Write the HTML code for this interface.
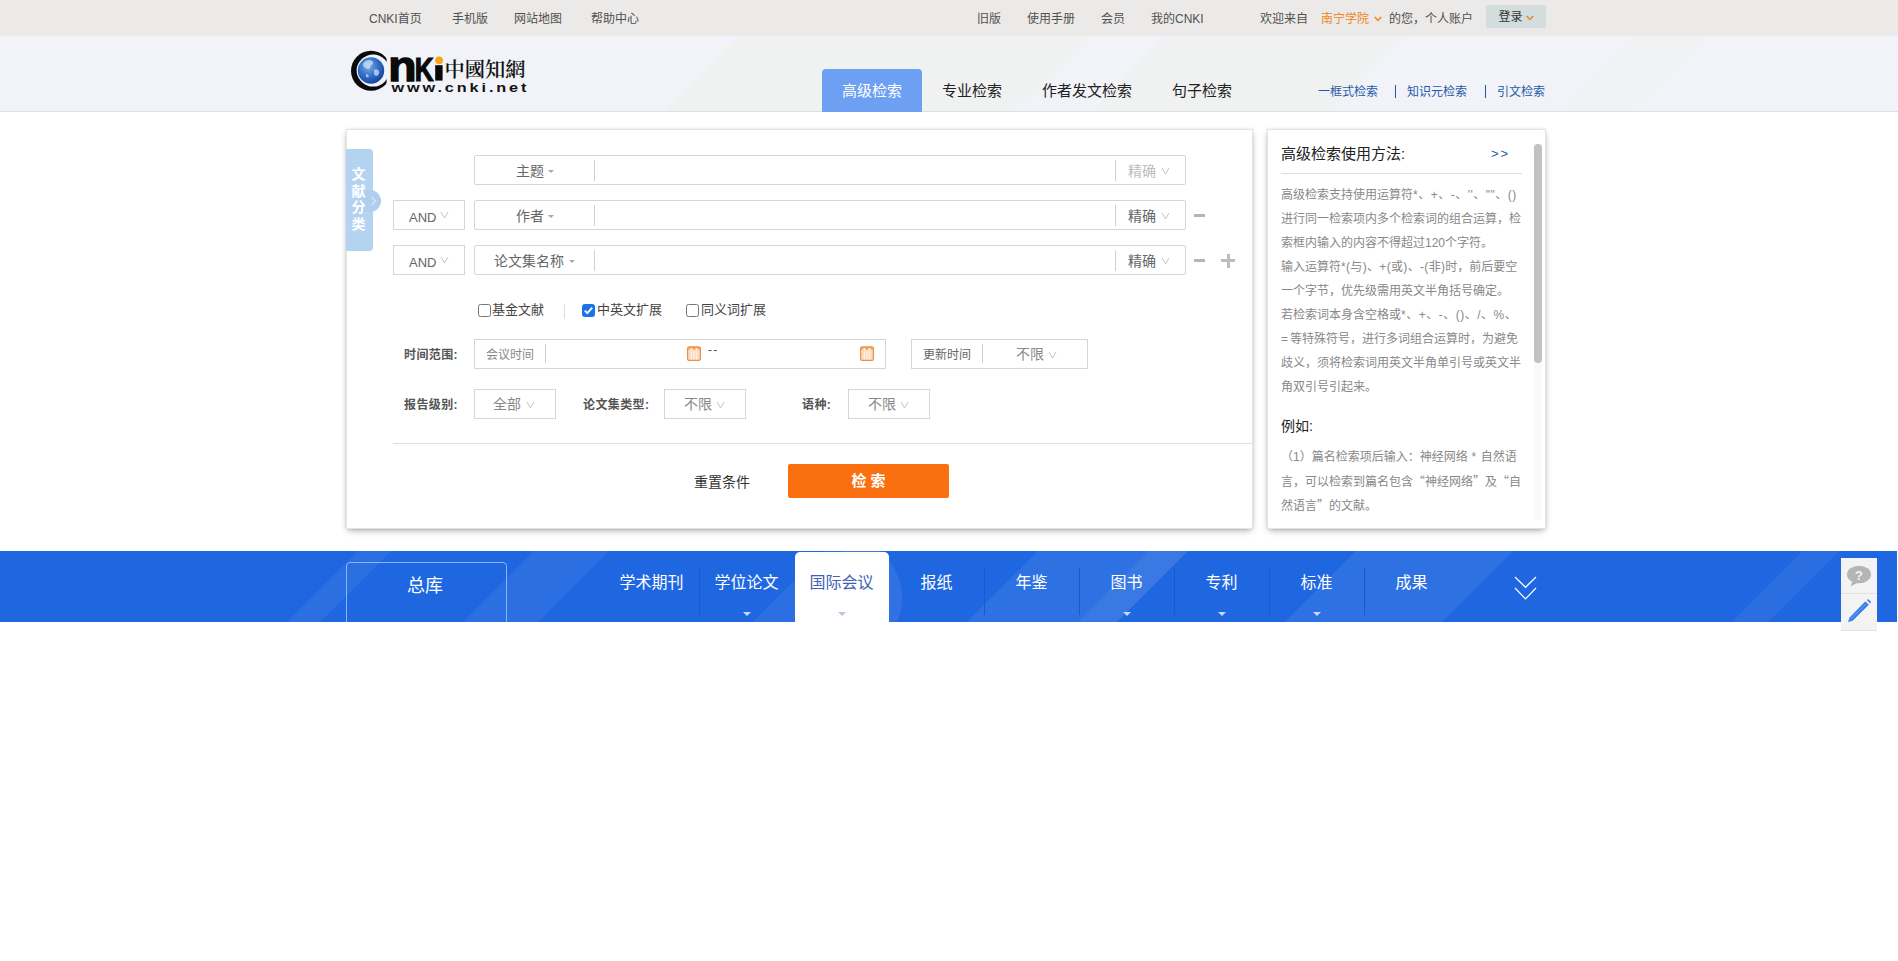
<!DOCTYPE html>
<html lang="zh-CN">
<head>
<meta charset="utf-8">
<title>高级检索-中国知网</title>
<style>
*{box-sizing:border-box;margin:0;padding:0}
html,body{width:1898px;height:961px;overflow:hidden;background:#fff}
body{position:relative;font-family:"Liberation Sans","Noto Sans CJK SC",sans-serif;font-size:12px;color:#333}
.abs{position:absolute;white-space:nowrap}
/* top bar */
#topbar{position:absolute;left:0;top:0;width:1898px;height:36px;background:#ebeae8}
#topbar .t{position:absolute;top:1px;line-height:36px;font-size:12px;color:#505050;white-space:nowrap}
#login{position:absolute;left:1486px;top:5px;width:60px;height:23px;background:#d3dddd;border-radius:2px;font-size:12px;color:#333;line-height:25px;padding-left:12.5px}
/* header */
#header{position:absolute;left:0;top:36px;width:1898px;height:76px;background:#f1f3f8;overflow:hidden}
.tab{position:absolute;top:33px;height:43px;line-height:43px;font-size:15px;color:#222;white-space:nowrap}
#tab1{left:822px;width:100px;background:#6d9ff2;color:#fff;border-radius:4px 4px 0 0;text-align:center}
.rl{position:absolute;top:48px;font-size:12px;color:#1f5aa6;line-height:16px;white-space:nowrap}
.rsep{position:absolute;top:49px;width:1px;height:13px;background:#1f5aa6}
/* main panel */
#panel{position:absolute;left:346px;top:129px;width:907px;height:400px;background:#fff;border:1px solid #e3e3e3;box-shadow:0 3px 7px -2px rgba(0,0,0,.38),0 0 3px rgba(0,0,0,.08)}
#side{position:absolute;left:346px;top:129px;width:279px;height:400px}
#rpanel{position:absolute;left:1267px;top:129px;width:279px;height:400px;background:#fff;border:1px solid #e3e3e3;box-shadow:0 3px 7px -2px rgba(0,0,0,.38),0 0 3px rgba(0,0,0,.08);overflow:hidden}
.box{position:absolute;border:1px solid #d6d6d6;background:#fff}
.bt{position:absolute;font-size:14px;color:#666;white-space:nowrap;line-height:20px}
.lb{position:absolute;font-size:12px;font-weight:bold;color:#555;letter-spacing:.4px;white-space:nowrap;line-height:16px}
.vs{position:absolute;width:1px;background:#d0d0d0}
/* blue bar */
#bar{position:absolute;left:0;top:551px;width:1897px;height:71px;background:#1f67e1;overflow:hidden}
.nv{position:absolute;top:21px;font-size:16px;color:#fff;line-height:22px;white-space:nowrap}
.nsep{position:absolute;top:17px;width:1px;height:47px;background:#1a59c9}
.tri{position:absolute;top:61px;width:0;height:0;border-left:4.5px solid transparent;border-right:4.5px solid transparent;border-top:4.5px solid #c9d9f7;margin-left:.5px}

.dn{position:absolute;width:0;height:0;border-left:3px solid transparent;border-right:3px solid transparent;border-top:3px solid #aaa}
.vv{position:absolute;width:9px;height:8px;overflow:visible}
.vv path{fill:none;stroke:#c4c4c4;stroke-width:1}
.cb{position:absolute;width:13px;height:13px;border:1px solid #767676;border-radius:2.5px;background:#fff}
.cb.on{background:#1a73e8;border-color:#1a73e8}
.ct{position:absolute;font-size:13px;line-height:18px;color:#444;white-space:nowrap}
.cal{position:absolute}

.hl{position:absolute;left:13px;font-size:12px;line-height:24px;color:#888;white-space:nowrap}
.st{position:absolute;top:0;height:71px;background:#fff;transform:skewX(-45deg);transform-origin:0 100%}

.hs{position:absolute;top:0;height:76px;background:#f0efee;opacity:.7;transform:skewX(-45deg);transform-origin:0 100%}
.q{font-family:"Noto Sans CJK SC",sans-serif}
.ls{letter-spacing:.5px}
</style>
</head>
<body>
<!-- TOPBAR -->
<div id="topbar">
<span class="t" style="left:369px">CNKI首页</span>
<span class="t" style="left:452px">手机版</span>
<span class="t" style="left:514px">网站地图</span>
<span class="t" style="left:591px">帮助中心</span>
<span class="t" style="left:977px">旧版</span>
<span class="t" style="left:1027px">使用手册</span>
<span class="t" style="left:1101px">会员</span>
<span class="t" style="left:1151px">我的CNKI</span>
<span class="t" style="left:1260px">欢迎来自</span>
<span class="t" style="left:1321px;color:#f08519">南宁学院</span>
<span class="t" style="left:1389px">的您，个人账户</span>
<div id="login">登录</div>
<svg style="position:absolute;left:1374px;top:16px" width="8" height="6" viewBox="0 0 8 6"><path d="M0.8 1 L4 4.4 L7.2 1" fill="none" stroke="#f08519" stroke-width="1.5"/></svg>
<svg style="position:absolute;left:1526px;top:15px" width="8" height="6" viewBox="0 0 8 6"><path d="M0.8 1 L4 4.4 L7.2 1" fill="none" stroke="#f08519" stroke-width="1.5"/></svg>
</div>
<!-- HEADER -->
<div id="header">
<div class="hs" style="left:663px;width:350px"></div><div class="hs" style="left:1090px;width:240px"></div><div class="hs" style="left:1560px;width:70px;opacity:.4"></div>
<div style="position:absolute;left:0;top:75px;width:1898px;height:1px;background:#dcdfe3"></div>
<svg id="logo" style="position:absolute;left:346px;top:10px" width="190" height="52" viewBox="346 46 190 52">
<defs><radialGradient id="gl" cx="0.4" cy="0.35" r="0.7"><stop offset="0" stop-color="#7fb0e6"/><stop offset="0.5" stop-color="#3472c8"/><stop offset="1" stop-color="#143f9c"/></radialGradient>
<mask id="cm"><rect x="346" y="46" width="40.6" height="52" fill="#fff"/><circle cx="373.2" cy="70.6" r="16" fill="#000"/></mask></defs>
<circle cx="371" cy="70.8" r="20" fill="#0a0a0a" mask="url(#cm)"/>
<circle cx="371" cy="70.5" r="14.4" fill="#e9f1fb"/>
<circle cx="371" cy="70.5" r="13.2" fill="url(#gl)"/>
<path d="M363 64 q2 -4 7 -4 q4 1 3 4 q-3 1 -3 4 q-2 2 -4 0 q-3 -1 -3 -4z M374 70 q3 -2 5 1 q1 3 -2 5 q-3 0 -3 -3z M366 74 q2 0 3 2 q-1 2 -3 1z" fill="#d6e6f8" opacity=".7"/>
<text transform="translate(388.3 80.6) scale(1.1 1)" font-family="Liberation Sans, sans-serif" font-weight="bold" font-size="42" fill="#0a0a0a" stroke="#0a0a0a" stroke-width="1.4">n</text>
<text transform="translate(414.8 80.6) scale(0.8 1)" font-family="Liberation Sans, sans-serif" font-weight="bold" font-size="32.5" fill="#0a0a0a" stroke="#0a0a0a" stroke-width="1.2">K</text>
<rect x="435.2" y="65.2" width="7.4" height="15.4" fill="#0a0a0a"/>
<circle cx="439.1" cy="60.3" r="3.9" fill="#f7a41d"/>
<text x="444.5" y="76.8" font-family="Noto Serif CJK SC, Noto Sans CJK SC, serif" font-weight="600" font-size="20" textLength="81" lengthAdjust="spacingAndGlyphs" fill="#111">中國知網</text>
<text transform="translate(391.5 92.3) scale(1.3 1)" font-family="Liberation Sans, sans-serif" font-weight="bold" font-size="12.5" textLength="103.8" lengthAdjust="spacing" fill="#111">www.cnki.net</text>
</svg>
<div class="tab" id="tab1">高级检索</div>
<div class="tab" style="left:942px">专业检索</div>
<div class="tab" style="left:1042px">作者发文检索</div>
<div class="tab" style="left:1172px">句子检索</div>
<span class="rl" style="left:1318px">一框式检索</span>
<span class="rsep" style="left:1395px"></span>
<span class="rl" style="left:1407px">知识元检索</span>
<span class="rsep" style="left:1485px"></span>
<span class="rl" style="left:1497px">引文检索</span>
</div>
<!-- PANEL -->
<div id="panel"></div>
<!-- side tab -->
<div style="position:absolute;left:346px;top:149px;width:27px;height:102px;background:#b4d3f0;border-radius:0 4px 4px 0"></div>
<div style="position:absolute;left:360px;top:190px;width:21px;height:22px;background:#aecfee;border-radius:0 11px 11px 0"></div>
<svg style="position:absolute;left:369px;top:195px" width="8" height="13" viewBox="0 0 8 13"><path d="M2.5 2 L6.5 6 L2.5 10" fill="none" stroke="#d6e7f8" stroke-width="1.5"/></svg>
<div style="position:absolute;left:351px;top:166px;width:15px;font-size:14px;line-height:16.7px;color:#fff;text-align:center;font-weight:bold">文<br>献<br>分<br>类</div>
<!-- row 1 -->
<div class="box" style="left:474px;top:155px;width:712px;height:30px;border-radius:2px"></div>
<div class="vs" style="left:594px;top:160px;height:21px"></div>
<div class="vs" style="left:1115px;top:160px;height:21px"></div>
<span class="bt" style="left:516px;top:161px">主题</span><i class="dn" style="left:548px;top:170px"></i>
<span class="bt" style="left:1128px;top:161px;color:#bbb">精确</span><svg class="vv" style="left:1161px;top:167px"><path d="M1 1 L4.5 7 L8 1"/></svg>
<!-- row 2 -->
<div class="box" style="left:393px;top:200px;width:72px;height:30px"></div>
<span class="bt" style="left:409px;top:208px;font-size:13px">AND</span><svg class="vv" style="left:440px;top:211px"><path d="M1 1 L4.5 7 L8 1"/></svg>
<div class="box" style="left:474px;top:200px;width:712px;height:30px;border-radius:2px"></div>
<div class="vs" style="left:594px;top:205px;height:21px"></div>
<div class="vs" style="left:1115px;top:205px;height:21px"></div>
<span class="bt" style="left:516px;top:206px">作者</span><i class="dn" style="left:548px;top:215px"></i>
<span class="bt" style="left:1128px;top:206px">精确</span><svg class="vv" style="left:1161px;top:212px"><path d="M1 1 L4.5 7 L8 1"/></svg>
<div style="position:absolute;left:1194px;top:214px;width:11px;height:3px;background:#b5b5b5"></div>
<!-- row 3 -->
<div class="box" style="left:393px;top:245px;width:72px;height:30px"></div>
<span class="bt" style="left:409px;top:253px;font-size:13px">AND</span><svg class="vv" style="left:440px;top:256px"><path d="M1 1 L4.5 7 L8 1"/></svg>
<div class="box" style="left:474px;top:245px;width:712px;height:30px;border-radius:2px"></div>
<div class="vs" style="left:594px;top:250px;height:21px"></div>
<div class="vs" style="left:1115px;top:250px;height:21px"></div>
<span class="bt" style="left:494px;top:251px">论文集名称</span><i class="dn" style="left:569px;top:260px"></i>
<span class="bt" style="left:1128px;top:251px">精确</span><svg class="vv" style="left:1161px;top:257px"><path d="M1 1 L4.5 7 L8 1"/></svg>
<div style="position:absolute;left:1194px;top:259px;width:11px;height:3px;background:#b5b5b5"></div>
<div style="position:absolute;left:1221px;top:259px;width:14px;height:3px;background:#bdbdbd"></div>
<div style="position:absolute;left:1226.5px;top:253.5px;width:3px;height:14px;background:#bdbdbd"></div>
<!-- checkboxes -->
<div class="cb" style="left:478px;top:304px"></div><span class="ct" style="left:492px;top:301px">基金文献</span>
<div class="vs" style="left:564px;top:304px;height:15px;background:#ddd"></div>
<div class="cb on" style="left:582px;top:304px"><svg width="13" height="13" viewBox="0 0 13 13" style="position:absolute;left:-1px;top:-1px"><path d="M2.8 6.6 L5.3 9.2 L10.2 3.6" fill="none" stroke="#fff" stroke-width="1.9"/></svg></div><span class="ct" style="left:597px;top:301px">中英文扩展</span>
<div class="cb" style="left:686px;top:304px"></div><span class="ct" style="left:701px;top:301px">同义词扩展</span>
<!-- time range -->
<span class="lb" style="left:404px;top:347px">时间范围:</span>
<div class="box" style="left:474px;top:339px;width:412px;height:30px"></div>
<span class="abs" style="left:486px;top:347px;font-size:12px;line-height:16px;color:#888">会议时间</span>
<div class="vs" style="left:545px;top:344px;height:19px"></div>
<svg class="cal" style="left:687px;top:346px" width="14" height="15" viewBox="0 0 14 15"><rect x="0.6" y="0.8" width="12.8" height="13.6" rx="1.6" fill="#fddcc2" stroke="#e8904a" stroke-width="1.2"/><path d="M1 1.2h12v2.2h-12z" fill="#f29a4a"/><path d="M3 2.2l1.4 2.2l1.4-2.2zM8.2 2.2l1.4 2.2l1.4-2.2z" fill="#fff"/><path d="M4.3 5.5v8M7 5.5v8M9.7 5.5v8" stroke="#fff" stroke-width="1" opacity=".7"/></svg>
<span class="abs" style="left:708px;top:343px;font-size:12px;line-height:14px;color:#555;letter-spacing:1.2px">--</span>
<svg class="cal" style="left:860px;top:346px" width="14" height="15" viewBox="0 0 14 15"><rect x="0.6" y="0.8" width="12.8" height="13.6" rx="1.6" fill="#fddcc2" stroke="#e8904a" stroke-width="1.2"/><path d="M1 1.2h12v2.2h-12z" fill="#f29a4a"/><path d="M3 2.2l1.4 2.2l1.4-2.2zM8.2 2.2l1.4 2.2l1.4-2.2z" fill="#fff"/><path d="M4.3 5.5v8M7 5.5v8M9.7 5.5v8" stroke="#fff" stroke-width="1" opacity=".7"/></svg>
<div class="box" style="left:911px;top:339px;width:177px;height:30px"></div>
<span class="abs" style="left:923px;top:347px;font-size:12px;line-height:16px;color:#666">更新时间</span>
<div class="vs" style="left:982px;top:344px;height:19px"></div>
<span class="bt" style="left:1016px;top:344px;color:#888">不限</span><svg class="vv" style="left:1048px;top:351px"><path d="M1 1 L4.5 7 L8 1"/></svg>
<!-- row: report level -->
<span class="lb" style="left:404px;top:397px">报告级别:</span>
<div class="box" style="left:474px;top:389px;width:82px;height:30px"></div>
<span class="bt" style="left:493px;top:394px;color:#888">全部</span><svg class="vv" style="left:526px;top:401px"><path d="M1 1 L4.5 7 L8 1"/></svg>
<span class="lb" style="left:583px;top:397px">论文集类型:</span>
<div class="box" style="left:664px;top:389px;width:82px;height:30px"></div>
<span class="bt" style="left:684px;top:394px;color:#888">不限</span><svg class="vv" style="left:716px;top:401px"><path d="M1 1 L4.5 7 L8 1"/></svg>
<span class="lb" style="left:802px;top:397px">语种:</span>
<div class="box" style="left:848px;top:389px;width:82px;height:30px"></div>
<span class="bt" style="left:868px;top:394px;color:#888">不限</span><svg class="vv" style="left:900px;top:401px"><path d="M1 1 L4.5 7 L8 1"/></svg>
<!-- hr + buttons -->
<div style="position:absolute;left:393px;top:443px;width:859px;height:1px;background:#ddd"></div>
<span class="abs" style="left:694px;top:472px;font-size:14px;line-height:20px;color:#333">重置条件</span>
<div style="position:absolute;left:788px;top:464px;width:161px;height:34px;background:#fa6f10;border-radius:2px;color:#fff;font-size:15px;font-weight:bold;line-height:34px;text-align:center">检 索</div>
<div id="rpanel">
<span class="abs" style="left:13px;top:14px;font-size:15px;line-height:20px;color:#222">高级检索使用方法:</span>
<span class="abs" style="left:223px;top:14px;font-size:13px;line-height:20px;color:#1f5aa6;letter-spacing:2px">&gt;&gt;</span>
<div style="position:absolute;left:13px;top:43px;width:241px;height:1px;background:#ddd"></div>
<div class="hl" style="top:53px">高级检索支持使用运算符<span class="ls">*、+、-、''、&quot;&quot;、()</span></div>
<div class="hl" style="top:77px">进行同一检索项内多个检索词的组合运算，检</div>
<div class="hl" style="top:101px">索框内输入的内容不得超过120个字符。</div>
<div class="hl" style="top:125px">输入运算符<span style="letter-spacing:.33px">*(与)、+(或)、-(非)</span>时，前后要空</div>
<div class="hl" style="top:149px">一个字节，优先级需用英文半角括号确定。</div>
<div class="hl" style="top:173px">若检索词本身含空格或<span class="ls">*、+、-、()、/、%、</span></div>
<div class="hl" style="top:197px"><span style="letter-spacing:2px">=</span>等特殊符号，进行多词组合运算时，为避免</div>
<div class="hl" style="top:221px">歧义，须将检索词用英文半角单引号或英文半</div>
<div class="hl" style="top:245px">角双引号引起来。</div>
<span class="abs" style="left:13px;top:286px;font-size:14px;line-height:20px;color:#222">例如:</span>
<div class="hl" style="top:315px">（1）篇名检索项后输入：神经网络<span style="letter-spacing:.6px"> * </span>自然语</div>
<div class="hl" style="top:339px">言，可以检索到篇名包含<span class="q">“</span>神经网络<span class="q">”</span>及<span class="q">“</span>自</div>
<div class="hl" style="top:363px">然语言<span class="q">”</span>的文献。</div>
<div style="position:absolute;left:266px;top:14px;width:8px;height:376px;background:#f9f9f9"></div>
<div style="position:absolute;left:266px;top:14px;width:8px;height:219px;background:#c1c1c1;border-radius:4px"></div>
</div>
<!-- BAR -->
<div id="bar">
<div class="st" style="left:287px;width:33px;opacity:0.06"></div><div class="st" style="left:463px;width:75px;opacity:0.06"></div><div class="st" style="left:967px;width:150px;opacity:0.07"></div><div class="st" style="left:1078px;width:39px;opacity:0.06"></div><div class="st" style="left:1285px;width:157px;opacity:0.07"></div><div class="st" style="left:1732px;width:36px;opacity:0.05"></div>
<div style="position:absolute;left:842px;top:0;width:70px;height:71px;overflow:hidden"><div style="position:absolute;left:-60px;top:-13px;width:120px;height:120px;border-radius:60px;background:#fff;opacity:.08"></div></div><div class="st" style="left:753px;width:60px;opacity:.06"></div>
<div style="position:absolute;left:346px;top:11px;width:161px;height:70px;border:1px solid #8db4f3;border-radius:4px 4px 0 0"></div>
<span class="abs" style="left:407px;top:23px;font-size:18px;line-height:24px;color:#fff">总库</span>
<div style="position:absolute;left:795px;top:1px;width:94px;height:70px;background:#fff;border-radius:5px 5px 0 0"></div>
<div class="nsep" style="left:699px"></div><div class="nsep" style="left:984px"></div><div class="nsep" style="left:1079px"></div><div class="nsep" style="left:1174px"></div><div class="nsep" style="left:1269px"></div><div class="nsep" style="left:1364px"></div>
<span class="nv" style="left:619.5px">学术期刊</span>
<span class="nv" style="left:714.5px">学位论文</span><i class="tri" style="left:742.0px"></i>
<span class="nv" style="left:809.5px;color:#3f62b5">国际会议</span><i class="tri" style="left:837.0px;border-top-color:#b9c8e8"></i>
<span class="nv" style="left:920.5px">报纸</span>
<span class="nv" style="left:1015.5px">年鉴</span>
<span class="nv" style="left:1110.5px">图书</span><i class="tri" style="left:1122.0px"></i>
<span class="nv" style="left:1205.5px">专利</span><i class="tri" style="left:1217.0px"></i>
<span class="nv" style="left:1300.5px">标准</span><i class="tri" style="left:1312.0px"></i>
<span class="nv" style="left:1395.5px">成果</span>
<svg style="position:absolute;left:1512px;top:24px" width="26" height="26" viewBox="0 0 26 26"><path d="M3 2 L13.5 12.3 L24 2 M3 13 L13.5 23.8 L24 13" fill="none" stroke="#fff" stroke-width="1.2"/></svg>
</div>
<div style="position:absolute;left:1841px;top:558px;width:36px;height:73px;background:#f3f3f3;border-bottom:1px solid #e2e2e2">
<div style="position:absolute;left:0;top:35px;width:36px;height:1px;background:#e2e2e2"></div>
<svg style="position:absolute;left:5px;top:7px" width="26" height="23" viewBox="0 0 26 23"><ellipse cx="13" cy="9.5" rx="12" ry="8.8" fill="#b5b5b5"/><path d="M7 15 L4.5 21.5 L13 17 Z" fill="#b5b5b5"/><text x="13" y="14.5" font-size="13" font-weight="bold" fill="#f3f3f3" text-anchor="middle" font-family="Liberation Sans, sans-serif">?</text></svg>
<svg style="position:absolute;left:5px;top:39px" width="27" height="27" viewBox="0 0 27 27"><path d="M2.6 24.6 L4 20.6 L19.4 4.8 L22.4 7.8 L6.8 23.2 Z" fill="#3b7de9" stroke="#3b7de9" stroke-width="0.8" stroke-linejoin="round"/><path d="M21 3.2 L24 6.2 L25.2 5 L22.2 2 Z" fill="#3b7de9"/><path d="M5.4 21.6 L20.2 6.6" stroke="#7fa9f2" stroke-width="0.7"/></svg>
</div>
</body>
</html>
